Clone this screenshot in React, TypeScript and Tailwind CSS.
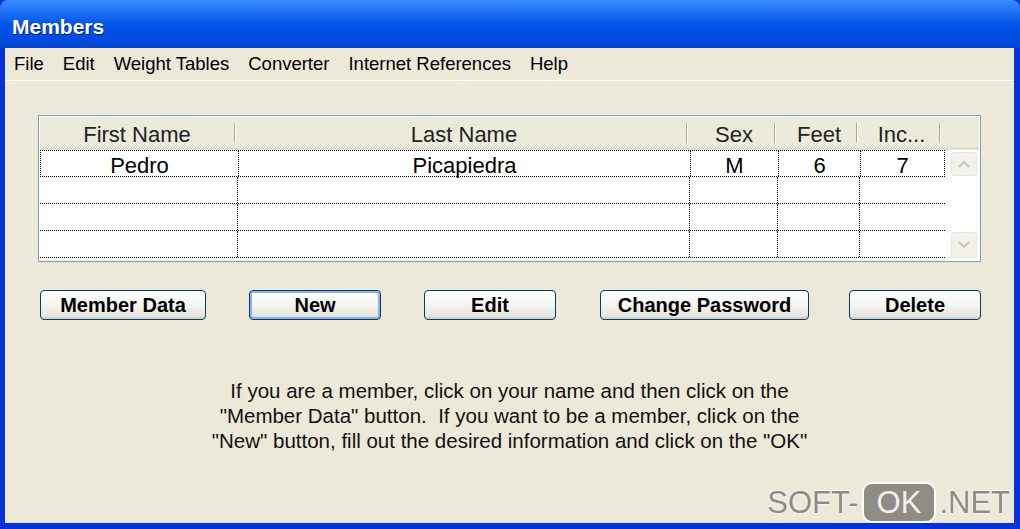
import React from "react";

const cols = [
  { w: "w-[198px]", label: "First Name", val: "Pedro" },
  { w: "w-[452px]", label: "Last Name", val: "Picapiedra" },
  { w: "w-[88px]", label: "Sex", val: "M" },
  { w: "w-[82px]", label: "Feet", val: "6" },
  { w: "w-[83px]", label: "Inc...", val: "7" },
];

function Btn({ label, w, focus }: { label: string; w: string; focus?: boolean }) {
  return (
    <div
      className={`${w} h-[30px] rounded-[4px] border border-[#003C74] bg-gradient-to-b from-white via-[#F4F4F0] to-[#E3E2DA] flex items-center justify-center text-[20px] font-bold text-black ${
        focus ? "shadow-[inset_0_0_0_2px_#8DB2E3]" : "shadow-[inset_0_-2px_0_#D6D0C5]"
      }`}
    >
      {label}
    </div>
  );
}

export default function App() {
  return (
    <div
      className="w-[1020px] h-[529px] flex flex-col bg-[#0831D9] overflow-hidden"
      style={{ fontFamily: '"Liberation Sans", Arial, sans-serif' }}
    >
      {/* Title bar */}
      <div className="h-[48px] shrink-0 rounded-t-[8px] bg-gradient-to-b from-[#3A8CFF] via-[#0055EA] to-[#0046D8] flex items-center pl-[12px] pt-[6px]">
        <span className="text-white text-[21px] font-bold [text-shadow:1px_1px_0_#0A1E6A]">Members</span>
      </div>
      <div className="flex-1 flex flex-col ml-[5px] mr-[6px] mb-[6px] bg-[#ECE9D8]">
        {/* Menu */}
        <div className="h-[33px] shrink-0 flex items-center text-[18.5px] text-black border-b border-white pl-[9px] gap-[19px]">
          <span>File</span>
          <span>Edit</span>
          <span>Weight Tables</span>
          <span>Converter</span>
          <span>Internet References</span>
          <span>Help</span>
        </div>
        {/* Table */}
        <div className="mt-[34px] ml-[33px] w-[943px] h-[147px] border border-[#7F9DB9] bg-white flex flex-col p-[1px]">
          <div className="h-[33px] flex bg-[#EBEADB] border-b-[3px] border-[#E2DFD0] text-[22px] text-[#222]">
            {cols.map((c, i) => (
              <div key={i} className={`${c.w} flex items-center justify-center relative pt-[4px]`}>
                <span className={i === 0 ? "mr-[4px]" : ""}>{c.label}</span>
                <div className="absolute right-[2px] top-[6px] h-[20px] w-[2px] border-l border-[#ACA899] border-r border-r-white" />
              </div>
            ))}
            <div className="flex-1" />
          </div>
          <div className="flex flex-1">
            <div className="flex flex-col">
              {[0, 1, 2, 3].map((r) => (
                <div
                  key={r}
                  className={`flex h-[27px] border-b border-dotted border-black ${r === 0 ? "border-t border-l border-r" : ""}`}
                >
                  {cols.map((c, i) => (
                    <div
                      key={i}
                      className={`${c.w} flex items-center justify-center text-[22px] text-black pt-[4px] ${
                        i < 4 ? "border-r border-dotted border-black" : ""
                      }`}
                    >
                      {r === 0 ? c.val : ""}
                    </div>
                  ))}
                </div>
              ))}
            </div>
            <div className="flex-1 flex flex-col justify-between items-center py-[2px] pl-[3px]">
              <div className="w-[26px] h-[24px] rounded-[3px] border border-[#E6E4DC] bg-[#F2F1EC] flex items-center justify-center">
                <svg width="12" height="8" viewBox="0 0 12 8">
                  <path d="M1 7 L6 2 L11 7" stroke="#C9C7BA" strokeWidth="2" fill="none" />
                </svg>
              </div>
              <div className="w-[26px] h-[26px] rounded-[3px] border border-[#E6E4DC] bg-[#F2F1EC] flex items-center justify-center">
                <svg width="12" height="8" viewBox="0 0 12 8">
                  <path d="M1 1 L6 6 L11 1" stroke="#C9C7BA" strokeWidth="2" fill="none" />
                </svg>
              </div>
            </div>
          </div>
        </div>
        {/* Buttons */}
        <div className="mt-[28px] ml-[35px] flex">
          <Btn label="Member Data" w="w-[166px]" />
          <div className="ml-[43px]"><Btn label="New" w="w-[132px]" focus /></div>
          <div className="ml-[43px]"><Btn label="Edit" w="w-[132px]" /></div>
          <div className="ml-[44px]"><Btn label="Change Password" w="w-[209px]" /></div>
          <div className="ml-[40px]"><Btn label="Delete" w="w-[132px]" /></div>
        </div>
        {/* Text */}
        <div className="mt-[58px] text-center text-[20.5px] leading-[25px] text-[#111]">
          <div>If you are a member, click on your name and then click on the</div>
          <div>"Member Data" button.&nbsp; If you want to be a member, click on the</div>
          <div>"New" button, fill out the desired information and click on the "OK"</div>
        </div>
        {/* Watermark */}
        <div className="flex-1 flex items-end justify-end pr-[4px]">
          <div className="flex items-center leading-none text-[31px] text-[#8E8C84] [text-shadow:0_0_2px_white,0_0_2px_white,0_0_1px_white]">
            <span>SOFT-</span>
            <span className="mx-[3px] px-[13px] h-[41px] flex items-center rounded-[10px] bg-[#8E8C84] text-[#F0EFEA] border-2 border-white [text-shadow:none]">OK</span>
            <span>.NET</span>
          </div>
        </div>
      </div>
    </div>
  );
}
